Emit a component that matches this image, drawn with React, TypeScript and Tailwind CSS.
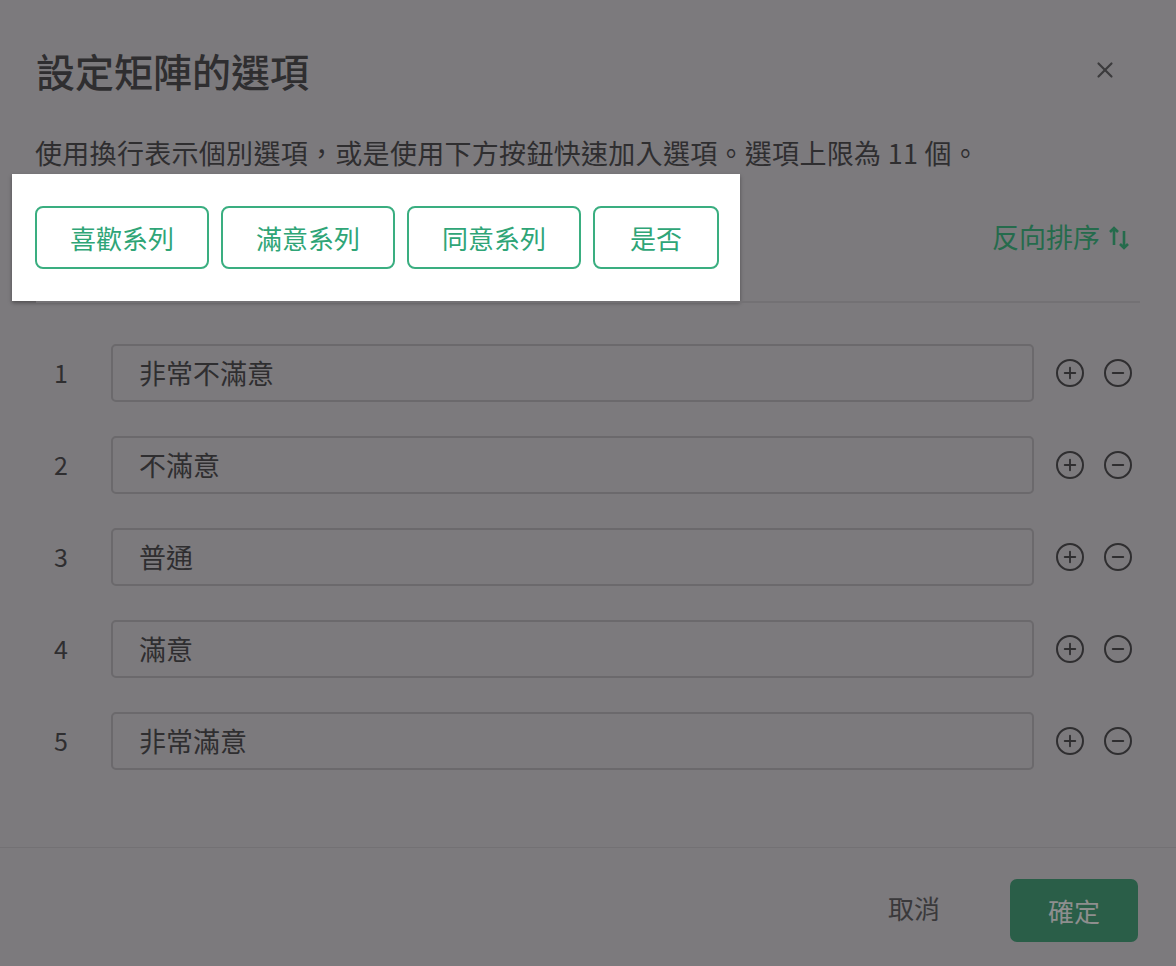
import { Plus, Minus, X } from "lucide-react"

const font = { fontFamily: '"Noto Sans CJK TC", "Noto Sans", sans-serif' }

const presets = [
  { label: "喜歡系列", w: "w-[174px]" },
  { label: "滿意系列", w: "w-[174px]" },
  { label: "同意系列", w: "w-[174px]" },
  { label: "是否", w: "w-[126px]" },
]

const options = ["非常不滿意", "不滿意", "普通", "滿意", "非常滿意"]

function SortIcon() {
  return (
    <svg width="22" height="26" viewBox="0 0 22 26" fill="none" stroke="currentColor" strokeWidth="2.6">
      <path d="M6 20V3M2 7l4-4 4 4" />
      <path d="M16 6v17M12 19l4 4 4-4" />
    </svg>
  )
}

export default function App() {
  return (
    <div className="w-[1176px] h-[966px] bg-[#7c7a7d] text-[#2f2e30] flex flex-col overflow-hidden" style={font}>
      <div className="flex items-center justify-between pl-[36px] pr-[58px] pt-[44px]">
        <h1 className="text-[39px] font-medium leading-[52px]">設定矩陣的選項</h1>
        <X className="w-[26px] h-[26px] text-[#3c3b3d]" strokeWidth={2} />
      </div>
      <p className="pl-[35px] mt-[38px] text-[27px] leading-[38px] tracking-[0.3px]">
        使用換行表示個別選項，或是使用下方按鈕快速加入選項。選項上限為 11 個。
      </p>
      <div className="flex items-center justify-between mt-[2px] pl-[12px] pr-[46px]">
        <div className="w-[728px] h-[127px] bg-white shadow-[0_2px_4px_rgba(0,0,0,0.35)] flex items-center gap-[12px] pl-[23px]">
          {presets.map((p) => (
            <button
              key={p.label}
              className={`${p.w} h-[63px] rounded-[8px] border-2 border-[#3aae80] text-[#2fa577] text-[26px] bg-white`}
            >
              {p.label}
            </button>
          ))}
        </div>
        <div className="flex items-center gap-[8px] text-[#256b4c] text-[27px]">
          反向排序 <SortIcon />
        </div>
      </div>
      <div className="mx-[36px] border-t-2 border-[#737174]" />
      <div className="flex flex-col gap-[34px] mt-[41px] pl-[54px] pr-[44px]">
        {options.map((o, i) => (
          <div key={o} className="flex items-center">
            <span className="w-[57px] text-[25px]">{i + 1}</span>
            <div className="w-[923px] h-[58px] rounded-[5px] border-2 border-[#6b696c] flex items-center px-[26px] text-[27px]">
              {o}
            </div>
            <div className="flex items-center gap-[20px] ml-[22px]">
              <span className="w-[28px] h-[28px] rounded-full border-[2.5px] border-[#2f2e30] flex items-center justify-center">
                <Plus className="w-[18px] h-[18px]" strokeWidth={2.5} />
              </span>
              <span className="w-[28px] h-[28px] rounded-full border-[2.5px] border-[#2f2e30] flex items-center justify-center">
                <Minus className="w-[18px] h-[18px]" strokeWidth={2.5} />
              </span>
            </div>
          </div>
        ))}
      </div>
      <div className="mt-auto border-t border-[#737174] h-[119px] flex items-center justify-end pr-[38px] gap-[70px]">
        <span className="text-[26px] text-[#3a393b]">取消</span>
        <button className="w-[128px] h-[63px] mt-[6px] rounded-[7px] bg-[#2a5e48] text-[#8e8e8e] text-[26px]">確定</button>
      </div>
    </div>
  )
}
